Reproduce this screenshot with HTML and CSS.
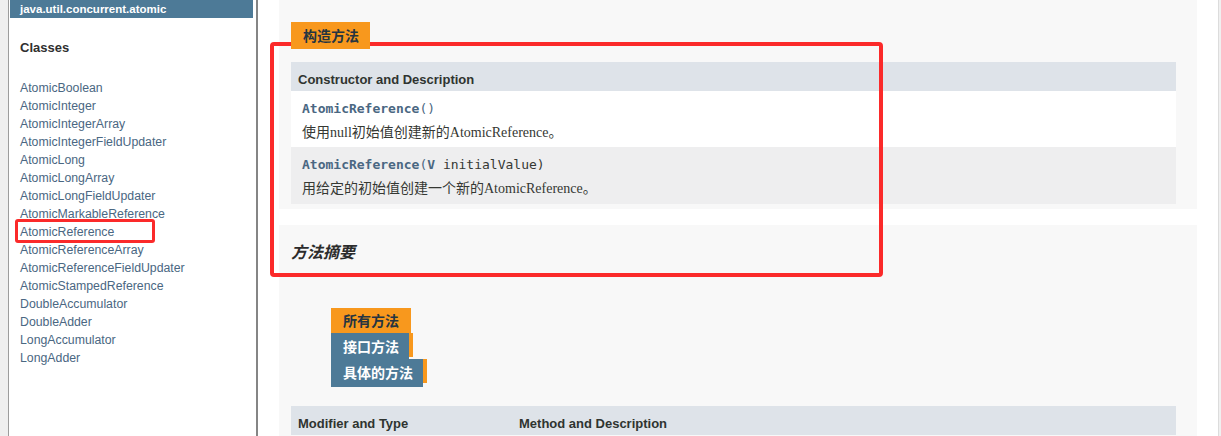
FILE: index.html
```html
<!DOCTYPE html>
<html lang="zh">
<head>
<meta charset="utf-8">
<title>AtomicReference</title>
<link rel="stylesheet" href="styles.css">
</head>
<body>
<div class="frame">
  <div class="gutter"></div>
  <aside class="sidebar">
    <div class="pkg">java.util.concurrent.atomic</div>
    <h2 class="classes-title">Classes</h2>
    <ul class="class-list">
      <li><a>AtomicBoolean</a></li>
      <li><a>AtomicInteger</a></li>
      <li><a>AtomicIntegerArray</a></li>
      <li><a>AtomicIntegerFieldUpdater</a></li>
      <li><a>AtomicLong</a></li>
      <li><a>AtomicLongArray</a></li>
      <li><a>AtomicLongFieldUpdater</a></li>
      <li><a>AtomicMarkableReference</a></li>
      <li><a>AtomicReference</a></li>
      <li><a>AtomicReferenceArray</a></li>
      <li><a>AtomicReferenceFieldUpdater</a></li>
      <li><a>AtomicStampedReference</a></li>
      <li><a>DoubleAccumulator</a></li>
      <li><a>DoubleAdder</a></li>
      <li><a>LongAccumulator</a></li>
      <li><a>LongAdder</a></li>
    </ul>
  </aside>
  <main class="main">
    <section class="block block-ctor">
      <div class="caption"><span class="tab tab-active">构造方法</span></div>
      <div class="table">
        <div class="thead"><div class="th">Constructor and Description</div></div>
        <div class="row row-white">
          <div class="code"><a class="member">AtomicReference</a><span class="paren">()</span></div>
          <div class="desc">使用null初始值创建新的AtomicReference。</div>
        </div>
        <div class="row row-alt">
          <div class="code"><a class="member">AtomicReference</a><span class="paren">(</span><a class="type">V</a> initialValue)</div>
          <div class="desc">用给定的初始值创建一个新的AtomicReference。</div>
        </div>
      </div>
    </section>
    <section class="block block-method">
      <h3 class="summary-title">方法摘要</h3>
      <div class="tabs">
        <div class="mtab mtab-active"><span class="mtab-label">所有方法</span></div>
        <div class="mtab"><span class="mtab-label">接口方法</span><span class="mtab-end"></span></div>
        <div class="mtab"><span class="mtab-label">具体的方法</span><span class="mtab-end"></span></div>
      </div>
      <div class="table">
        <div class="thead thead-cols">
          <div class="th th-first">Modifier and Type</div>
          <div class="th">Method and Description</div>
        </div>
      </div>
    </section>
  </main>
  <div class="rightedge"></div>
</div>
<div class="mark mark-big"></div>
<div class="mark mark-small"></div>
</body>
</html>
```

FILE: styles.css
```css
html, body {
  margin: 0;
  padding: 0;
  height: 436px;
  overflow: hidden;
  background: #ffffff;
}

body {
  font-family: "Liberation Sans", Arial, "Noto Sans CJK SC", sans-serif;
  color: #353833;
}

.frame {
  display: flex;
  height: 436px;
  overflow: hidden;
}

.gutter {
  width: 8px;
  background: #efefef;
  flex: none;
}

.sidebar {
  width: 247px;
  flex: none;
  background: #ffffff;
  border-left: 1px solid #9c9c9c;
  border-right: 2px solid #858585;
}

.pkg {
  margin-left: 1px;
  width: 233px;
  height: 18px;
  padding-left: 10px;
  background: #4d7a97;
  color: #ffffff;
  font-size: 11.5px;
  font-weight: bold;
  line-height: 18px;
  white-space: nowrap;
}

.classes-title {
  margin: 22px 0 0 11px;
  font-size: 13px;
  line-height: 16px;
  font-weight: bold;
  color: #2f2f2f;
}

.class-list {
  list-style: none;
  margin: 23px 0 0 11px;
  padding: 0;
}

.class-list li {
  font-size: 12.3px;
  line-height: 18px;
  white-space: nowrap;
}

.class-list a {
  color: #4a6782;
}

.main {
  width: 918px;
  flex: none;
  padding: 0 21px;
  background: #ffffff;
}

.rightedge {
  flex: 1;
  border-left: 1px solid #dcdcdc;
  background: #f0f0f0;
}

.block {
  background: #f8f8f8;
  padding: 0 21px 5px 12px;
}

.block-ctor {
  padding-top: 22px;
  height: 182px;
}

.block-method {
  margin-top: 16px;
  padding-top: 16px;
  padding-bottom: 0;
  height: 195px;
}

.caption {
  display: flex;
  position: relative;
  z-index: 2;
}

.tab {
  display: block;
  height: 27px;
  line-height: 27px;
  padding: 0 11px 0 12px;
  font-family: "Noto Sans CJK SC", sans-serif;
  font-size: 14px;
  font-weight: bold;
  color: #253441;
}

.tab-active {
  background: #f8981d;
}

.table {
  margin-top: 13px;
}

.thead {
  display: flex;
  height: 29px;
  background: #dee3e9;
}

.th {
  padding: 10px 0 0 7px;
  font-size: 13px;
  line-height: 16px;
  font-weight: bold;
  color: #2f3430;
  white-space: nowrap;
}

.th-first {
  width: 214px;
}

.row {
  padding: 9px 11px 5px;
  height: 42px;
}

.row-white {
  background: #ffffff;
}

.row-alt {
  height: 43px;
  background: #eeeeef;
}

.code {
  font-family: "DejaVu Sans Mono", monospace;
  font-size: 13px;
  line-height: 18px;
  color: #353833;
  white-space: nowrap;
}

.member, .type {
  color: #4a6782;
  font-weight: bold;
}

.paren {
  color: #4a6782;
}

.desc {
  margin-top: 5px;
  font-family: "Liberation Serif", "Noto Sans CJK SC", serif;
  font-size: 14px;
  line-height: 19px;
  color: #353833;
  white-space: nowrap;
}

.summary-title {
  margin: 0;
  font-family: "Noto Sans CJK SC", sans-serif;
  font-size: 16px;
  line-height: 20px;
  font-style: italic;
  font-weight: bold;
  color: #2c2c2c;
}

.tabs {
  margin: 47px 0 0 40px;
  display: flex;
  flex-direction: column;
  align-items: flex-start;
}

.mtab {
  display: flex;
  align-items: flex-start;
}

.mtab-label {
  display: block;
  height: 26px;
  line-height: 26px;
  padding: 0 10px 0 12px;
  background: #4d7a97;
  color: #ffffff;
  font-family: "Noto Sans CJK SC", sans-serif;
  font-size: 14px;
  font-weight: bold;
}

.mtab-active .mtab-label {
  height: 25px;
  line-height: 25px;
  padding-right: 12px;
  background: #f8981d;
  color: #253441;
}

.mtab:last-child .mtab-label {
  height: 28px;
  line-height: 27px;
}

.mtab-end {
  display: block;
  width: 4px;
  height: 24px;
  background: #f8981d;
}

.block-method .table {
  margin-top: 19px;
}

.mark {
  position: absolute;
  border: 4px solid #fb2a2a;
  border-radius: 4px;
  box-sizing: border-box;
  z-index: 1;
}

.mark-big {
  left: 270px;
  top: 42px;
  width: 613px;
  height: 235px;
}

.mark-small {
  left: 15px;
  top: 219px;
  width: 140px;
  height: 24px;
  border-width: 3px;
  border-radius: 3px;
}
```
